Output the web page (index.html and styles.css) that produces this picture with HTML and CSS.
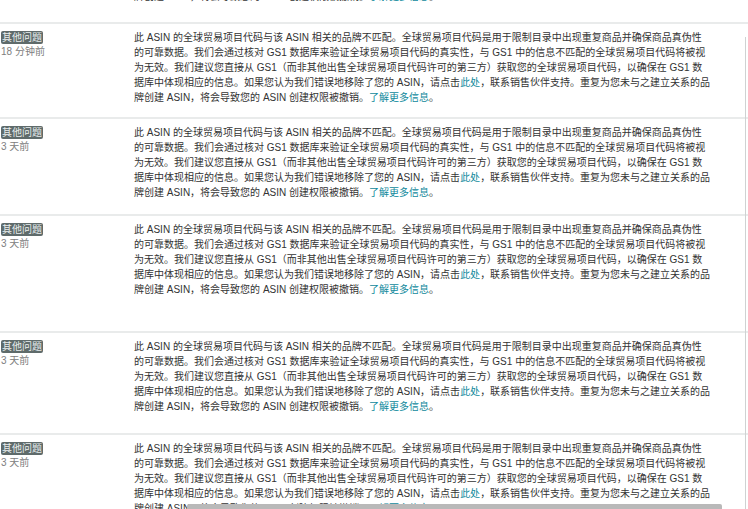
FILE: index.html
```html
<!DOCTYPE html>
<html lang="zh-CN">
<head>
<meta charset="utf-8">
<title>通知</title>
<link rel="stylesheet" href="styles.css">
</head>
<body>
<div class="viewport">
  <ul class="list">
    <li class="row row-first">
      <div class="meta"></div>
      <p class="msg">此 ASIN 的全球贸易项目代码与该 ASIN 相关的品牌不匹配。全球贸易项目代码是用于限制目录中出现重复商品并确保商品真伪性<br>的可靠数据。我们会通过核对 GS1 数据库来验证全球贸易项目代码的真实性，与 GS1 中的信息不匹配的全球贸易项目代码将被视<br>为无效。我们建议您直接从 GS1（而非其他出售全球贸易项目代码许可的第三方）获取您的全球贸易项目代码，以确保在 GS1 数<br>据库中体现相应的信息。如果您认为我们错误地移除了您的 ASIN，请点击<a href="#">此处</a>，联系销售伙伴支持。重复为您未与之建立关系的品<br>牌创建 ASIN，将会导致您的 ASIN 创建权限被撤销。<a href="#">了解更多信息</a>。</p>
    </li>
    <li class="row pb-1">
      <div class="meta"><span class="tag">其他问题</span><span class="time">18 分钟前</span></div>
      <p class="msg">此 ASIN 的全球贸易项目代码与该 ASIN 相关的品牌不匹配。全球贸易项目代码是用于限制目录中出现重复商品并确保商品真伪性<br>的可靠数据。我们会通过核对 GS1 数据库来验证全球贸易项目代码的真实性，与 GS1 中的信息不匹配的全球贸易项目代码将被视<br>为无效。我们建议您直接从 GS1（而非其他出售全球贸易项目代码许可的第三方）获取您的全球贸易项目代码，以确保在 GS1 数<br>据库中体现相应的信息。如果您认为我们错误地移除了您的 ASIN，请点击<a href="#">此处</a>，联系销售伙伴支持。重复为您未与之建立关系的品<br>牌创建 ASIN，将会导致您的 ASIN 创建权限被撤销。<a href="#">了解更多信息</a>。</p>
    </li>
    <li class="row pb-2">
      <div class="meta"><span class="tag">其他问题</span><span class="time">3 天前</span></div>
      <p class="msg">此 ASIN 的全球贸易项目代码与该 ASIN 相关的品牌不匹配。全球贸易项目代码是用于限制目录中出现重复商品并确保商品真伪性<br>的可靠数据。我们会通过核对 GS1 数据库来验证全球贸易项目代码的真实性，与 GS1 中的信息不匹配的全球贸易项目代码将被视<br>为无效。我们建议您直接从 GS1（而非其他出售全球贸易项目代码许可的第三方）获取您的全球贸易项目代码，以确保在 GS1 数<br>据库中体现相应的信息。如果您认为我们错误地移除了您的 ASIN，请点击<a href="#">此处</a>，联系销售伙伴支持。重复为您未与之建立关系的品<br>牌创建 ASIN，将会导致您的 ASIN 创建权限被撤销。<a href="#">了解更多信息</a>。</p>
    </li>
    <li class="row pb-3">
      <div class="meta"><span class="tag">其他问题</span><span class="time">3 天前</span></div>
      <p class="msg">此 ASIN 的全球贸易项目代码与该 ASIN 相关的品牌不匹配。全球贸易项目代码是用于限制目录中出现重复商品并确保商品真伪性<br>的可靠数据。我们会通过核对 GS1 数据库来验证全球贸易项目代码的真实性，与 GS1 中的信息不匹配的全球贸易项目代码将被视<br>为无效。我们建议您直接从 GS1（而非其他出售全球贸易项目代码许可的第三方）获取您的全球贸易项目代码，以确保在 GS1 数<br>据库中体现相应的信息。如果您认为我们错误地移除了您的 ASIN，请点击<a href="#">此处</a>，联系销售伙伴支持。重复为您未与之建立关系的品<br>牌创建 ASIN，将会导致您的 ASIN 创建权限被撤销。<a href="#">了解更多信息</a>。</p>
    </li>
    <li class="row pb-4">
      <div class="meta"><span class="tag">其他问题</span><span class="time">3 天前</span></div>
      <p class="msg">此 ASIN 的全球贸易项目代码与该 ASIN 相关的品牌不匹配。全球贸易项目代码是用于限制目录中出现重复商品并确保商品真伪性<br>的可靠数据。我们会通过核对 GS1 数据库来验证全球贸易项目代码的真实性，与 GS1 中的信息不匹配的全球贸易项目代码将被视<br>为无效。我们建议您直接从 GS1（而非其他出售全球贸易项目代码许可的第三方）获取您的全球贸易项目代码，以确保在 GS1 数<br>据库中体现相应的信息。如果您认为我们错误地移除了您的 ASIN，请点击<a href="#">此处</a>，联系销售伙伴支持。重复为您未与之建立关系的品<br>牌创建 ASIN，将会导致您的 ASIN 创建权限被撤销。<a href="#">了解更多信息</a>。</p>
    </li>
    <li class="row pb-1">
      <div class="meta"><span class="tag">其他问题</span><span class="time">3 天前</span></div>
      <p class="msg">此 ASIN 的全球贸易项目代码与该 ASIN 相关的品牌不匹配。全球贸易项目代码是用于限制目录中出现重复商品并确保商品真伪性<br>的可靠数据。我们会通过核对 GS1 数据库来验证全球贸易项目代码的真实性，与 GS1 中的信息不匹配的全球贸易项目代码将被视<br>为无效。我们建议您直接从 GS1（而非其他出售全球贸易项目代码许可的第三方）获取您的全球贸易项目代码，以确保在 GS1 数<br>据库中体现相应的信息。如果您认为我们错误地移除了您的 ASIN，请点击<a href="#">此处</a>，联系销售伙伴支持。重复为您未与之建立关系的品<br>牌创建 ASIN，将会导致您的 ASIN 创建权限被撤销。<a href="#">了解更多信息</a>。</p>
    </li>
  </ul>
  <div class="vtrack"></div>
  <div class="hthumb"></div>
</div>
</body>
</html>
```

FILE: styles.css
```css
html, body {
  margin: 0;
  padding: 0;
  background: #ffffff;
  overflow: hidden;
}
body {
  font-family: "Liberation Sans", "Noto Sans CJK SC", sans-serif;
  font-size: 10px;
  color: #333333;
}
.viewport {
  width: 748px;
  height: 509px;
  overflow: hidden;
}
.list {
  list-style: none;
  margin: -77px 0 0 0;
  padding: 0;
}
.row {
  display: grid;
  grid-template-columns: 134px 600px;
  border-top: 2px solid #e9ebeb;
  padding: 6px 0 12px 0;
}
.row-first {
  border-top: 0;
  padding-bottom: 18px;
}
.pb-1 { padding-bottom: 12px; }
.pb-2 { padding-bottom: 14px; }
.pb-3 { padding-bottom: 34px; }
.pb-4 { padding-bottom: 19px; }
.meta {
  display: flex;
  flex-direction: column;
  align-items: flex-start;
  padding: 1px 0 0 1px;
}
.tag {
  background: #5f6b6b;
  color: #e9eeee;
  font-size: 10px;
  line-height: 11px;
  padding: 1px 1px;
  border-radius: 2px;
}
.time {
  color: #808080;
  font-size: 10px;
  line-height: 13px;
  margin-top: 1px;
}
.msg {
  margin: 0;
  line-height: 15px;
  white-space: nowrap;
  color: #333333;
}
.msg a {
  color: #10899c;
  text-decoration: none;
}
.vtrack {
  position: fixed;
  left: 745px;
  top: 37px;
  bottom: 0;
  width: 1px;
  background: #cfd2d2;
}
.hthumb {
  position: fixed;
  left: 187px;
  width: 535px;
  bottom: 0;
  height: 5px;
  background: #b9b9b9;
  border-radius: 2px 2px 0 0;
}
```
